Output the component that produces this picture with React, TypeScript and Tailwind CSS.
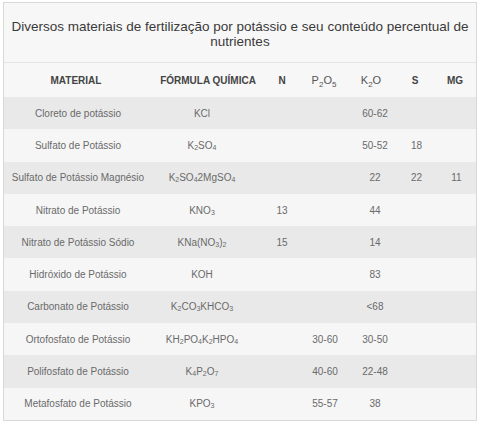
import type { ReactNode } from "react";

const S = ({ children }: { children: ReactNode }) => (
  <sub className="text-[7px] leading-none bottom-0 align-[-1px]">{children}</sub>
);

const HS = ({ children }: { children: ReactNode }) => (
  <sub className="text-[8px] leading-none bottom-0 align-[-3px]">{children}</sub>
);

type Row = [ReactNode, ReactNode, string, string, string, string, string];

const rows: Row[] = [
  ["Cloreto de potássio", "KCl", "", "", "60-62", "", ""],
  ["Sulfato de Potássio", <>K<S>2</S>SO<S>4</S></>, "", "", "50-52", "18", ""],
  ["Sulfato de Potássio Magnésio", <>K<S>2</S>SO<S>4</S>2MgSO<S>4</S></>, "", "", "22", "22", "11"],
  ["Nitrato de Potássio", <>KNO<S>3</S></>, "13", "", "44", "", ""],
  ["Nitrato de Potássio Sódio", <>KNa(NO<S>3</S>)<S>2</S></>, "15", "", "14", "", ""],
  ["Hidróxido de Potássio", "KOH", "", "", "83", "", ""],
  ["Carbonato de Potássio", <>K<S>2</S>CO<S>3</S>KHCO<S>3</S></>, "", "", "<68", "", ""],
  ["Ortofosfato de Potássio", <>KH<S>2</S>PO<S>4</S>K<S>2</S>HPO<S>4</S></>, "", "30-60", "30-50", "", ""],
  ["Polifosfato de Potássio", <>K<S>4</S>P<S>2</S>O<S>7</S></>, "", "40-60", "22-48", "", ""],
  ["Metafosfato de Potássio", <>KPO<S>3</S></>, "", "55-57", "38", "", ""],
];

const headPad = ["pl-[5px]", "pl-[30px]", "pl-[18px]", "pr-[5px]", "pr-[4px]", "pr-[3px]", "pr-[3px]"];
const cellPad = ["pl-[9px]", "pl-[18px]", "pl-[18px]", "pr-[3px]", "pl-[4px]", "", ""];

const grid = "grid grid-cols-[139px_100px_60px_47px_46px_41px_39px]";

export default function App() {
  return (
    <div className="w-[480px] h-[428px] bg-white pt-[2px] pl-[3px] font-['Liberation_Sans',Arial,sans-serif]">
      <div className="w-[474px] border border-[#d8d8d8] bg-[#f7f7f7]">
        <div className="pt-[16px] pb-[13px] text-center text-[13.5px] leading-[15px] text-[#3a3a3a] border-b border-[#e4e4e4]">
          Diversos materiais de fertilização por potássio e seu conteúdo percentual de nutrientes
        </div>
        <div className={`${grid} h-[34px] text-[10px] font-bold text-[#444]`}>
          {[
            "MATERIAL",
            "FÓRMULA QUÍMICA",
            "N",
            <>P<HS>2</HS>O<HS>5</HS></>,
            <>K<HS>2</HS>O</>,
            "S",
            "MG",
          ].map((h, i) => (
            <div
              key={i}
              className={`flex items-center justify-center whitespace-nowrap ${headPad[i]} ${i === 3 || i === 4 ? "font-normal text-[#555] text-[11px]" : ""}`}
            >
              <span>{h}</span>
            </div>
          ))}
        </div>
        {rows.map((r, ri) => (
          <div
            key={ri}
            className={`${grid} h-[32.3px] text-[10px] text-[#6a6a6a] ${ri % 2 === 0 ? "bg-[#e9e9e9]" : "bg-[#f6f6f6]"}`}
          >
            {r.map((c, ci) => (
              <div key={ci} className={`flex items-center justify-center whitespace-nowrap ${cellPad[ci]}`}>
                <span>{c}</span>
              </div>
            ))}
          </div>
        ))}
      </div>
    </div>
  );
}
